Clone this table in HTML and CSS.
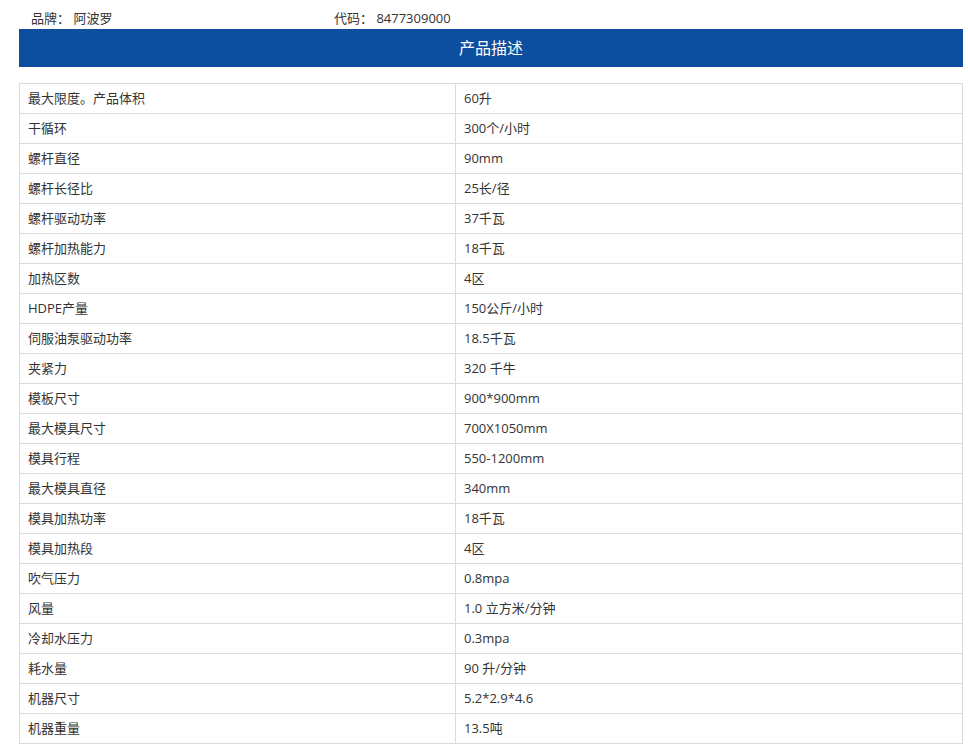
FILE: index.html
```html
<!DOCTYPE html>
<html lang="zh">
<head>
<meta charset="utf-8">
<link rel="stylesheet" href="styles.css">
</head>
<body>
<div class="meta">
  <div class="meta-item brand">品牌：&nbsp;阿波罗</div>
  <div class="meta-item code">代码：&nbsp;8477309000</div>
</div>
<div class="wrap">
  <div class="bar">产品描述</div>
  <table class="spec">
    <colgroup><col class="c1"><col class="c2"></colgroup>
    <tr><td>最大限度。产品体积</td><td>60升</td></tr>
    <tr><td>干循环</td><td>300个/小时</td></tr>
    <tr><td>螺杆直径</td><td>90mm</td></tr>
    <tr><td>螺杆长径比</td><td>25长/径</td></tr>
    <tr><td>螺杆驱动功率</td><td>37千瓦</td></tr>
    <tr><td>螺杆加热能力</td><td>18千瓦</td></tr>
    <tr><td>加热区数</td><td>4区</td></tr>
    <tr><td>HDPE产量</td><td>150公斤/小时</td></tr>
    <tr><td>伺服油泵驱动功率</td><td>18.5千瓦</td></tr>
    <tr><td>夹紧力</td><td>320 千牛</td></tr>
    <tr><td>模板尺寸</td><td>900*900mm</td></tr>
    <tr><td>最大模具尺寸</td><td>700X1050mm</td></tr>
    <tr><td>模具行程</td><td>550-1200mm</td></tr>
    <tr><td>最大模具直径</td><td>340mm</td></tr>
    <tr><td>模具加热功率</td><td>18千瓦</td></tr>
    <tr><td>模具加热段</td><td>4区</td></tr>
    <tr><td>吹气压力</td><td>0.8mpa</td></tr>
    <tr><td>风量</td><td>1.0 立方米/分钟</td></tr>
    <tr><td>冷却水压力</td><td>0.3mpa</td></tr>
    <tr><td>耗水量</td><td>90 升/分钟</td></tr>
    <tr><td>机器尺寸</td><td>5.2*2.9*4.6</td></tr>
    <tr><td>机器重量</td><td>13.5吨</td></tr>
  </table>
</div>
</body>
</html>
```
FILE: styles.css
```css
html, body {
  margin: 0;
  padding: 0;
  background: #fff;
}
body {
  font-family: "Open Sans", "Noto Sans CJK SC", sans-serif;
  font-size: 13px;
  color: #333;
}
.meta {
  display: flex;
  height: 29px;
  align-items: center;
  padding-left: 31px;
  padding-top: 6px;
  box-sizing: border-box;
}
.meta-item {
  line-height: 20px;
}
.brand {
  width: 303px;
}
.wrap {
  margin-left: 19px;
  width: 944px;
}
.bar {
  background: #0d4e9e;
  color: #fff;
  height: 38px;
  line-height: 38px;
  text-align: center;
  font-size: 16px;
}
.spec {
  margin-top: 16px;
  width: 944px;
  border-collapse: collapse;
}
.c1 { width: 436px; }
.spec td {
  border: 1px solid #dcdcdc;
  height: 30px;
  padding: 0 0 2px 8px;
  line-height: 20px;
  box-sizing: border-box;
}
```
